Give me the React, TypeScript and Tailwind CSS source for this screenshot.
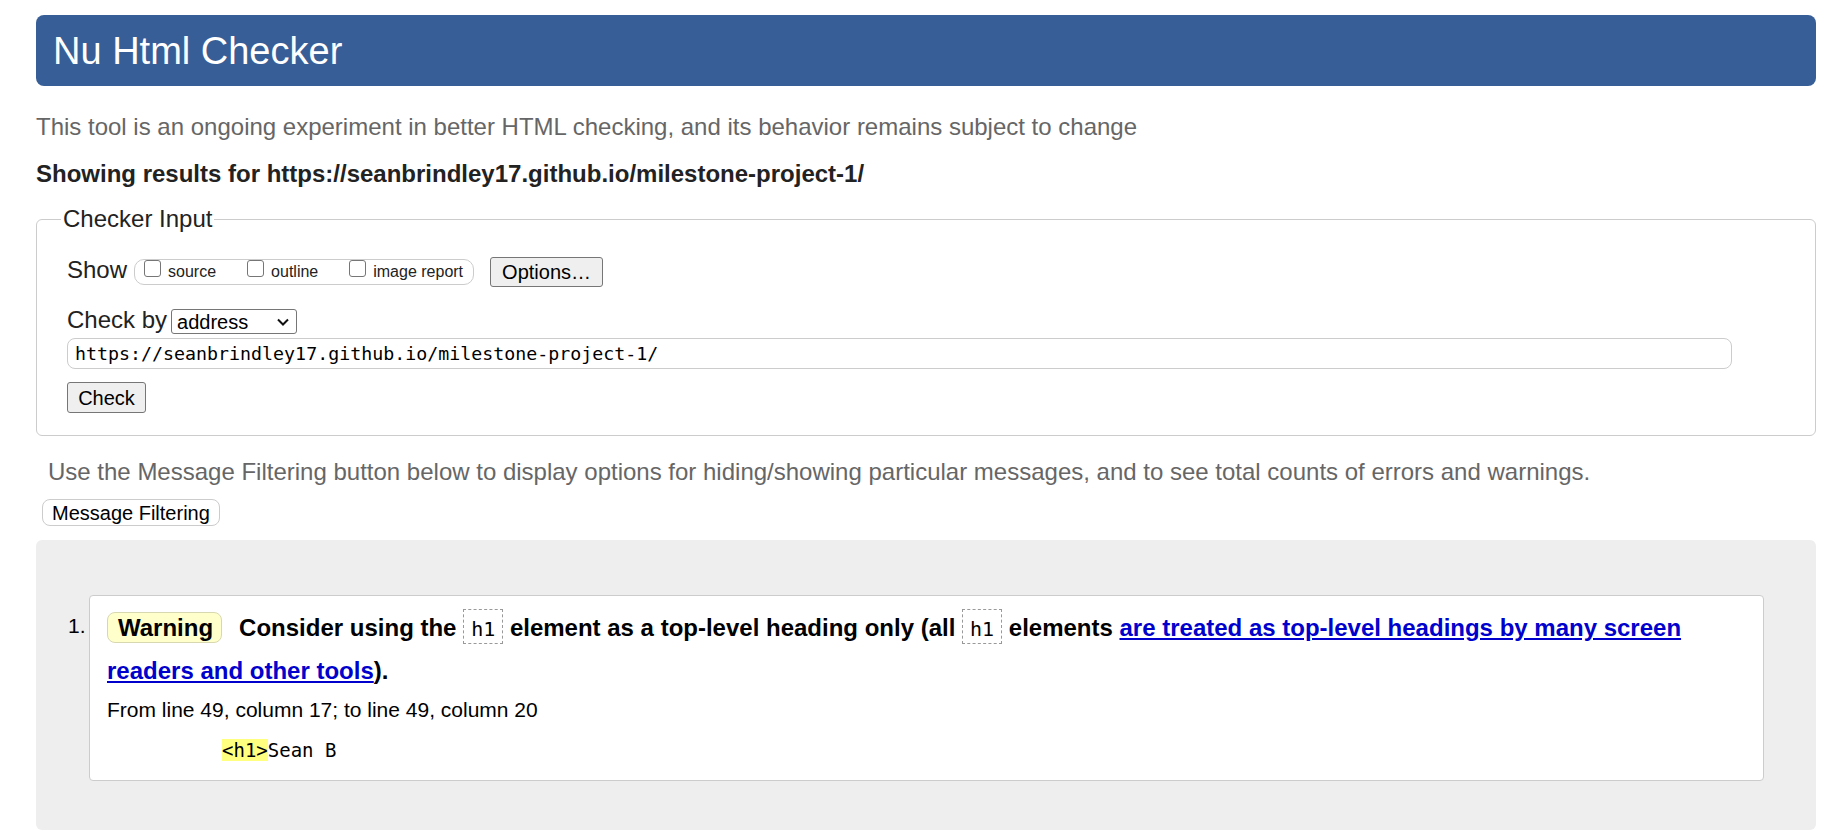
import React from 'react';

const sans = "font-['Liberation_Sans',Arial,sans-serif]";
const mono = "font-['DejaVu_Sans_Mono','Liberation_Mono',monospace]";

function ShowOption({ label }: { label: string }) {
  return (
    <label className="flex items-start">
      <input
        type="checkbox"
        className="appearance-none w-[17px] h-[17px] border border-[#767676] rounded-[3px] bg-white"
      />
      <span className="ml-[7px] mt-[2px] text-[16px] leading-[20px] text-[#222]">{label}</span>
    </label>
  );
}

function Code({ children }: { children: React.ReactNode }) {
  return (
    <span
      className={`inline-block ${mono} font-normal text-[20px] leading-[24px] pt-[7px] pb-[2px] px-[7px] border border-dashed border-[#999] text-black`}
    >
      {children}
    </span>
  );
}

export default function App() {
  return (
    <div className={`min-h-screen bg-white pt-[15px] pl-[36px] ${sans}`}>
      <div className="w-[1780px]">
        <h1 className="h-[71px] rounded-[8px] bg-[#375e97] pl-[17px] flex items-center text-[38px] leading-[44px] font-normal text-white">
          Nu Html Checker
        </h1>

        <p className="mt-[26px] text-[24px] leading-[30px] text-[#666]">
          This tool is an ongoing experiment in better HTML checking, and its behavior remains subject to change
        </p>

        <p className="mt-[17px] text-[24px] leading-[30px] font-bold text-[#222]">
          Showing results for https://seanbrindley17.github.io/milestone-project-1/
        </p>

        <fieldset className="mt-[15px] border border-[#ccc] rounded-[6px] pl-[24px] pt-[22px] pb-[22px]">
          <legend className="px-[2px] text-[24px] leading-[30px] text-[#222]">Checker Input</legend>
          <div className="pl-[6px]">
            {/* show options */}
            <div className="flex items-start">
              <span className="mt-[-1px] text-[24px] leading-[30px] text-[#222]">Show</span>
              <div className="flex items-start h-[26px] ml-[7px] mt-[3px] pl-[9px] pr-[10px] gap-[31px] border border-[#ccc] rounded-[10px]">
                <ShowOption label="source" />
                <ShowOption label="outline" />
                <ShowOption label="image report" />
              </div>
              <button className="ml-[16px] mt-[1px] w-[113px] h-[30px] bg-[#efefef] border border-[#767676] rounded-[3px] text-[20px] leading-[24px] text-black">
                Options…
              </button>
            </div>

            {/* check by */}
            <div className="flex items-start mt-[18px]">
              <span className="text-[24px] leading-[30px] text-[#222]">Check by</span>
              <div className="ml-[4px] mt-[4px] w-[126px] h-[25px] flex items-center justify-between pl-[5px] pr-[7px] border border-[#767676] rounded-[3px] bg-white">
                <span className="text-[20px] leading-[24px] text-black">address</span>
                <svg width="12" height="8" viewBox="0 0 12 8" fill="none">
                  <polyline points="1,1.5 6,6.5 11,1.5" stroke="#111" strokeWidth="2" />
                </svg>
              </div>
            </div>

            <input
              readOnly
              value="https://seanbrindley17.github.io/milestone-project-1/"
              className={`block mt-[3px] w-[1665px] h-[31px] pl-[7px] border border-[#ccc] rounded-[8px] ${mono} text-[18.3px] text-black outline-none`}
            />

            <button className="block mt-[13px] w-[79px] h-[31px] bg-[#efefef] border border-[#767676] rounded-[3px] text-[20px] leading-[24px] text-black">
              Check
            </button>
          </div>
        </fieldset>

        <p className="mt-[21px] pl-[12px] text-[24px] leading-[30px] text-[#666]">
          Use the Message Filtering button below to display options for hiding/showing particular messages, and to see total counts of errors and warnings.
        </p>

        <button className="block mt-[12px] ml-[6px] h-[27px] px-[9px] border border-[#ccc] rounded-[8px] bg-white text-[20px] leading-[24px] text-black">
          Message Filtering
        </button>

        <div className="mt-[14px] bg-[#eeeeee] rounded-[6px] pt-[55px] pb-[49px] pr-[52px] flex">
          <div className="w-[53px] shrink-0 pl-[32px] pt-[16px] text-[21px] leading-[30px] text-black">1.</div>
          <div className="flex-1 bg-white border border-[#ccc] rounded-[4px] pt-[10px] pl-[17px] pr-[43px] pb-[18px]">
            <p className="text-[24px] leading-[43px] font-bold text-black">
              <span className="inline-block leading-[24px] pt-[3px] pb-[2px] pl-[10px] pr-[8px] mr-[17px] bg-[#ffffcc] border border-[#d8d8b0] rounded-[8px]">
                Warning
              </span>
              Consider using the <Code>h1</Code> element as a top-level heading only (all <Code>h1</Code> elements{' '}
              <a href="#" className="text-[#0000cc] underline">
                are treated as top-level headings by many screen
              </a>{' '}
              <a href="#" className="text-[#0000cc] underline">
                readers and other tools
              </a>
              ).
            </p>
            <p className="mt-[3px] text-[21px] leading-[30px] text-black">
              From line 49, column 17; to line 49, column 20
            </p>
            <div className={`mt-[14px] pl-[115px] ${mono} text-[19px] leading-[23px] text-black whitespace-pre`}>
              <span className="bg-[#ffff80]">&lt;h1&gt;</span>Sean B
            </div>
          </div>
        </div>
      </div>
    </div>
  );
}
